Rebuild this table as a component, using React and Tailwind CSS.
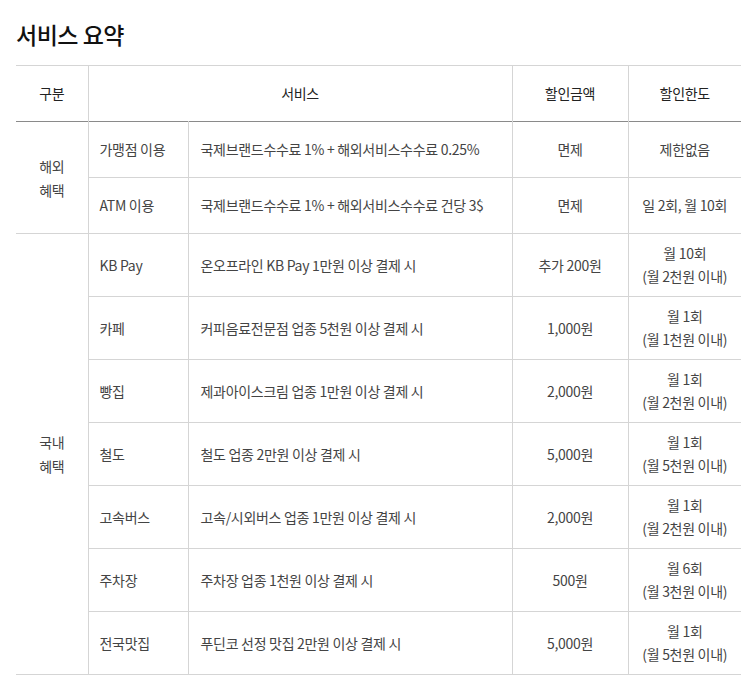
const overseas = [
  { name: '가맹점 이용', desc: '국제브랜드수수료 1% + 해외서비스수수료 0.25%', amount: '면제', limit: ['제한없음'] },
  { name: 'ATM 이용', desc: '국제브랜드수수료 1% + 해외서비스수수료 건당 3$', amount: '면제', limit: ['일 2회, 월 10회'] },
]

const domestic = [
  { name: 'KB Pay', desc: '온오프라인 KB Pay 1만원 이상 결제 시', amount: '추가 200원', limit: ['월 10회', '(월 2천원 이내)'] },
  { name: '카페', desc: '커피음료전문점 업종 5천원 이상 결제 시', amount: '1,000원', limit: ['월 1회', '(월 1천원 이내)'] },
  { name: '빵집', desc: '제과아이스크림 업종 1만원 이상 결제 시', amount: '2,000원', limit: ['월 1회', '(월 2천원 이내)'] },
  { name: '철도', desc: '철도 업종 2만원 이상 결제 시', amount: '5,000원', limit: ['월 1회', '(월 5천원 이내)'] },
  { name: '고속버스', desc: '고속/시외버스 업종 1만원 이상 결제 시', amount: '2,000원', limit: ['월 1회', '(월 2천원 이내)'] },
  { name: '주차장', desc: '주차장 업종 1천원 이상 결제 시', amount: '500원', limit: ['월 6회', '(월 3천원 이내)'] },
  { name: '전국맛집', desc: '푸딘코 선정 맛집 2만원 이상 결제 시', amount: '5,000원', limit: ['월 1회', '(월 5천원 이내)'] },
]

function Row({ item, first, group, span, height }) {
  return (
    <tr className={height}>
      {first && (
        <td rowSpan={span} className="border-r border-b border-[#d5d5d5] text-center align-middle leading-[24px] text-[#444]">
          {group[0]}<br />{group[1]}
        </td>
      )}
      <td className="border-r border-b border-[#d5d5d5] pl-[11px] text-[#444]">{item.name}</td>
      <td className="border-r border-b border-[#d5d5d5] pl-[12px] text-[#444]">{item.desc}</td>
      <td className="border-r border-b border-[#d5d5d5] text-center text-[#444]">{item.amount}</td>
      <td className="border-b border-[#d5d5d5] text-center leading-[23px] text-[#444]">
        {item.limit.map((l, i) => <div key={i}>{l}</div>)}
      </td>
    </tr>
  )
}

export default function App() {
  return (
    <div className="bg-white min-h-[686px] pl-4 pt-[18px] overflow-hidden" style={{ fontFamily: '"Noto Sans CJK KR", "Noto Sans", sans-serif' }}>
      <h2 className="text-[23px] font-medium leading-[32px] text-[#111] tracking-[-0.5px]">서비스 요약</h2>
      <table className="mt-[15px] w-[725px] border-collapse table-fixed text-[14px] tracking-[-0.3px]">
        <colgroup>
          <col className="w-[72px]" />
          <col className="w-[100px]" />
          <col className="w-[324px]" />
          <col className="w-[116px]" />
          <col className="w-[113px]" />
        </colgroup>
        <thead>
          <tr className="h-[56px] border-t border-[#d5d5d5] border-b border-b-[#8a8a8a] text-[#222]">
            <th className="font-normal border-r border-[#d5d5d5]">구분</th>
            <th colSpan={2} className="font-normal border-r border-[#d5d5d5]">서비스</th>
            <th className="font-normal border-r border-[#d5d5d5]">할인금액</th>
            <th className="font-normal">할인한도</th>
          </tr>
        </thead>
        <tbody>
          {overseas.map((item, i) => (
            <Row key={item.name} item={item} first={i === 0} group={['해외', '혜택']} span={2} height="h-[56px]" />
          ))}
          {domestic.map((item, i) => (
            <Row key={item.name} item={item} first={i === 0} group={['국내', '혜택']} span={7} height="h-[63px]" />
          ))}
        </tbody>
      </table>
    </div>
  )
}
